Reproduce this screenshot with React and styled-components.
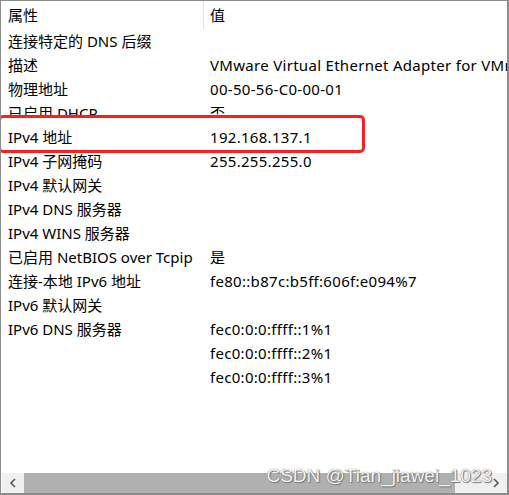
import styled, { createGlobalStyle } from "styled-components";

const GlobalStyle = createGlobalStyle`
  html, body {
    margin: 0;
    padding: 0;
    background: #ffffff;
  }
`;

const Window = styled.div`
  position: relative;
  box-sizing: border-box;
  width: 509px;
  height: 495px;
  border: 1px solid #8c8c8c;
  border-bottom-width: 2px;
  border-right-width: 2px;
  background: #ffffff;
  display: flex;
  flex-direction: column;
  overflow: hidden;
  font-family: "Noto Sans", "Noto Sans CJK SC", sans-serif;
  font-size: 15px;
  color: #000000;
`;

const List = styled.div`
  flex: 1;
  display: flex;
  flex-direction: column;
  overflow: hidden;
`;

const Row = styled.div`
  position: relative;
  z-index: ${(p) => (p.$front ? 2 : 0)};
  display: grid;
  grid-template-columns: 202px 1fr;
  height: ${(p) => (p.$header ? "28px" : "24px")};
  align-items: center;
  white-space: nowrap;
`;

const Cell = styled.div`
  line-height: 20px;
  overflow: hidden;
  display: flex;
  align-items: center;
  padding-left: ${(p) => (p.$divider ? "6px" : "7px")};
  border-left: ${(p) => (p.$divider ? "1px solid #e3e3e3" : "none")};
  align-self: ${(p) => (p.$divider ? "stretch" : "auto")};
  letter-spacing: ${(p) => (p.$value ? "0.3px" : "normal")};
`;

const Highlight = styled.div`
  position: absolute;
  z-index: 1;
  left: -3px;
  top: 114px;
  width: 361px;
  height: 32px;
  border: 3.5px solid #fb1f1f;
  border-radius: 5px;
  background: #ffffff;
`;

const ScrollBar = styled.div`
  height: 20px;
  display: flex;
  align-items: stretch;
  background: #f0f0f0;
  margin-left: 1px;
`;

const ArrowButton = styled.div`
  width: ${(p) => p.$w}px;
  display: flex;
  align-items: center;
  justify-content: center;
`;

const Track = styled.div`
  flex: 1;
  display: flex;
`;

const Thumb = styled.div`
  background: #b0b0b0;
`;

const Watermark = styled.div`
  position: absolute;
  right: 15px;
  bottom: 6px;
  font-family: "Liberation Sans", Arial, sans-serif;
  font-size: 19px;
  color: #f4f4f4;
  text-shadow: 0 0 1px #5a5a5a, 1px 1px 1px #7a7a7a;
  white-space: nowrap;
`;

const rows = [
  ["连接特定的 DNS 后缀", ""],
  ["描述", "VMware Virtual Ethernet Adapter for VMnet8"],
  ["物理地址", "00-50-56-C0-00-01"],
  ["已启用 DHCP", "否"],
  ["IPv4 地址", "192.168.137.1", true],
  ["IPv4 子网掩码", "255.255.255.0"],
  ["IPv4 默认网关", ""],
  ["IPv4 DNS 服务器", ""],
  ["IPv4 WINS 服务器", ""],
  ["已启用 NetBIOS over Tcpip", "是"],
  ["连接-本地 IPv6 地址", "fe80::b87c:b5ff:606f:e094%7"],
  ["IPv6 默认网关", ""],
  ["IPv6 DNS 服务器", "fec0:0:0:ffff::1%1"],
  ["", "fec0:0:0:ffff::2%1"],
  ["", "fec0:0:0:ffff::3%1"],
];

function Chevron({ dir }) {
  const d = dir === "left" ? "M6 1 L2 5 L6 9" : "M2 1 L6 5 L2 9";
  return (
    <svg width="8" height="10" viewBox="0 0 8 10">
      <path d={d} fill="none" stroke="#555" strokeWidth="1.6" />
    </svg>
  );
}

export default function App() {
  return (
    <>
      <GlobalStyle />
      <Window>
        <List>
          <Row $header>
            <Cell>属性</Cell>
            <Cell $divider>值</Cell>
          </Row>
          {rows.map(([name, value, front], i) => (
            <Row key={i} $front={front}>
              <Cell>{name}</Cell>
              <Cell $value>{value}</Cell>
            </Row>
          ))}
        </List>
        <Highlight />
        <ScrollBar>
          <ArrowButton $w={22}>
            <Chevron dir="left" />
          </ArrowButton>
          <Track>
            <Thumb style={{ width: 431 }} />
          </Track>
          <ArrowButton $w={22}>
            <Chevron dir="right" />
          </ArrowButton>
        </ScrollBar>
        <Watermark>CSDN @Tian_jiawei_1023</Watermark>
      </Window>
    </>
  );
}
